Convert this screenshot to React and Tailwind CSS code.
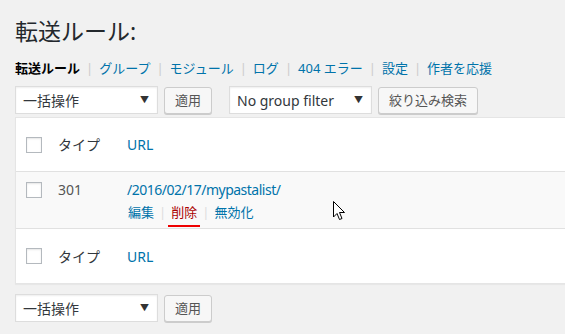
import React from 'react';

const font = { fontFamily: '"Noto Sans", "Noto Sans CJK JP", sans-serif' };

function Select({ label, w }) {
    return (
        <div className={`${w} h-[28px] bg-white border border-[#ddd] shadow-[inset_0_1px_2px_rgba(0,0,0,0.07)] flex items-center justify-between pl-[7px] pr-[8px] text-[14px] text-[#32373c]`}>
            <span>{label}</span>
            <span className="text-[9px] text-[#333]">▼</span>
        </div>
    );
}

function Button({ label, w }) {
    return (
        <div className={`${w} h-[27px] bg-[#f7f7f7] border border-[#ccc] rounded-[3px] shadow-[0_1px_0_#ccc] flex items-center justify-center text-[13px] text-[#555]`}>
            {label}
        </div>
    );
}

function Checkbox() {
    return <div className="w-[16px] h-[16px] bg-white border border-[#b4b9be] shadow-[inset_0_1px_2px_rgba(0,0,0,0.1)] shrink-0" />;
}

function Sep() {
    return <span className="text-[#ccc] mx-[6px]">|</span>;
}

export default function App() {
    const tabs = ['グループ', 'モジュール', 'ログ', '404 エラー', '設定', '作者を応援'];
    return (
        <div className="w-[565px] h-[334px] bg-[#f1f1f1] overflow-hidden relative" style={font}>
            <div className="pl-[15px] pt-[15px]">
                <h1 className="text-[23px] leading-[32px] text-[#23282d] font-normal">転送ルール:</h1>

                {/* sub navigation */}
                <div className="mt-[12px] h-[20px] flex items-center text-[13px] whitespace-nowrap">
                    <span className="font-bold text-black">転送ルール</span>
                    {tabs.map((t) => (
                        <React.Fragment key={t}>
                            <Sep />
                            <span className="text-[#0073aa]">{t}</span>
                        </React.Fragment>
                    ))}
                </div>

                {/* top controls */}
                <div className="mt-[7px] flex items-start">
                    <Select label="一括操作" w="w-[143px]" />
                    <div className="ml-[6px] mt-[1px]"><Button label="適用" w="w-[48px]" /></div>
                    <div className="ml-[17px]"><Select label="No group filter" w="w-[143px]" /></div>
                    <div className="ml-[6px] mt-[1px]"><Button label="絞り込み検索" w="w-[100px]" /></div>
                </div>

                {/* table */}
                <div className="mt-[3px] w-[600px] bg-white border border-[#e5e5e5] shadow-[0_1px_1px_rgba(0,0,0,0.04)] text-[14px]">
                    <div className="h-[54px] flex items-center pl-[10px] border-b border-[#e1e1e1]">
                        <Checkbox />
                        <span className="ml-[16px] w-[69px] text-[#32373c]">タイプ</span>
                        <span className="text-[#0073aa]">URL</span>
                    </div>
                    <div className="h-[57px] bg-[#f9f9f9] flex items-start pl-[10px] pt-[10px] border-b border-[#e1e1e1]">
                        <Checkbox />
                        <span className="ml-[16px] w-[69px] text-[#555] leading-[16px]">301</span>
                        <div className="flex flex-col">
                            <span className="text-[#0073aa] leading-[16px] tracking-[-0.5px]">/2016/02/17/mypastalist/</span>
                            <div className="mt-[6px] flex items-center text-[13px] leading-[17px] whitespace-nowrap">
                                <span className="text-[#0073aa] ml-[1px]">編集</span>
                                <span className="text-[#ddd] mx-[5px]">|</span>
                                <span className="relative text-[#a00]">
                                    削除
                                    <span className="absolute left-[-3px] right-[-3px] top-[21px] h-[2px] bg-[#e00]" />
                                </span>
                                <span className="text-[#ddd] mx-[5px]">|</span>
                                <span className="text-[#0073aa]">無効化</span>
                            </div>
                        </div>
                    </div>
                    <div className="h-[54px] flex items-center pl-[10px]">
                        <Checkbox />
                        <span className="ml-[16px] w-[69px] text-[#32373c]">タイプ</span>
                        <span className="text-[#0073aa]">URL</span>
                    </div>
                </div>

                {/* bottom controls */}
                <div className="mt-[10px] flex items-start">
                    <Select label="一括操作" w="w-[143px]" />
                    <div className="ml-[6px] mt-[1px]"><Button label="適用" w="w-[48px]" /></div>
                </div>
            </div>

            {/* mouse cursor */}
            <svg className="absolute left-[333px] top-[201px]" width="13" height="20" viewBox="0 0 13 20">
                <path d="M0.5 0.5 L0.5 16 L4 12.5 L6.5 18.5 L9 17.5 L6.5 11.5 L11.5 11.5 Z" fill="#fff" stroke="#000" strokeWidth="1" strokeLinejoin="miter" />
            </svg>
        </div>
    );
}
